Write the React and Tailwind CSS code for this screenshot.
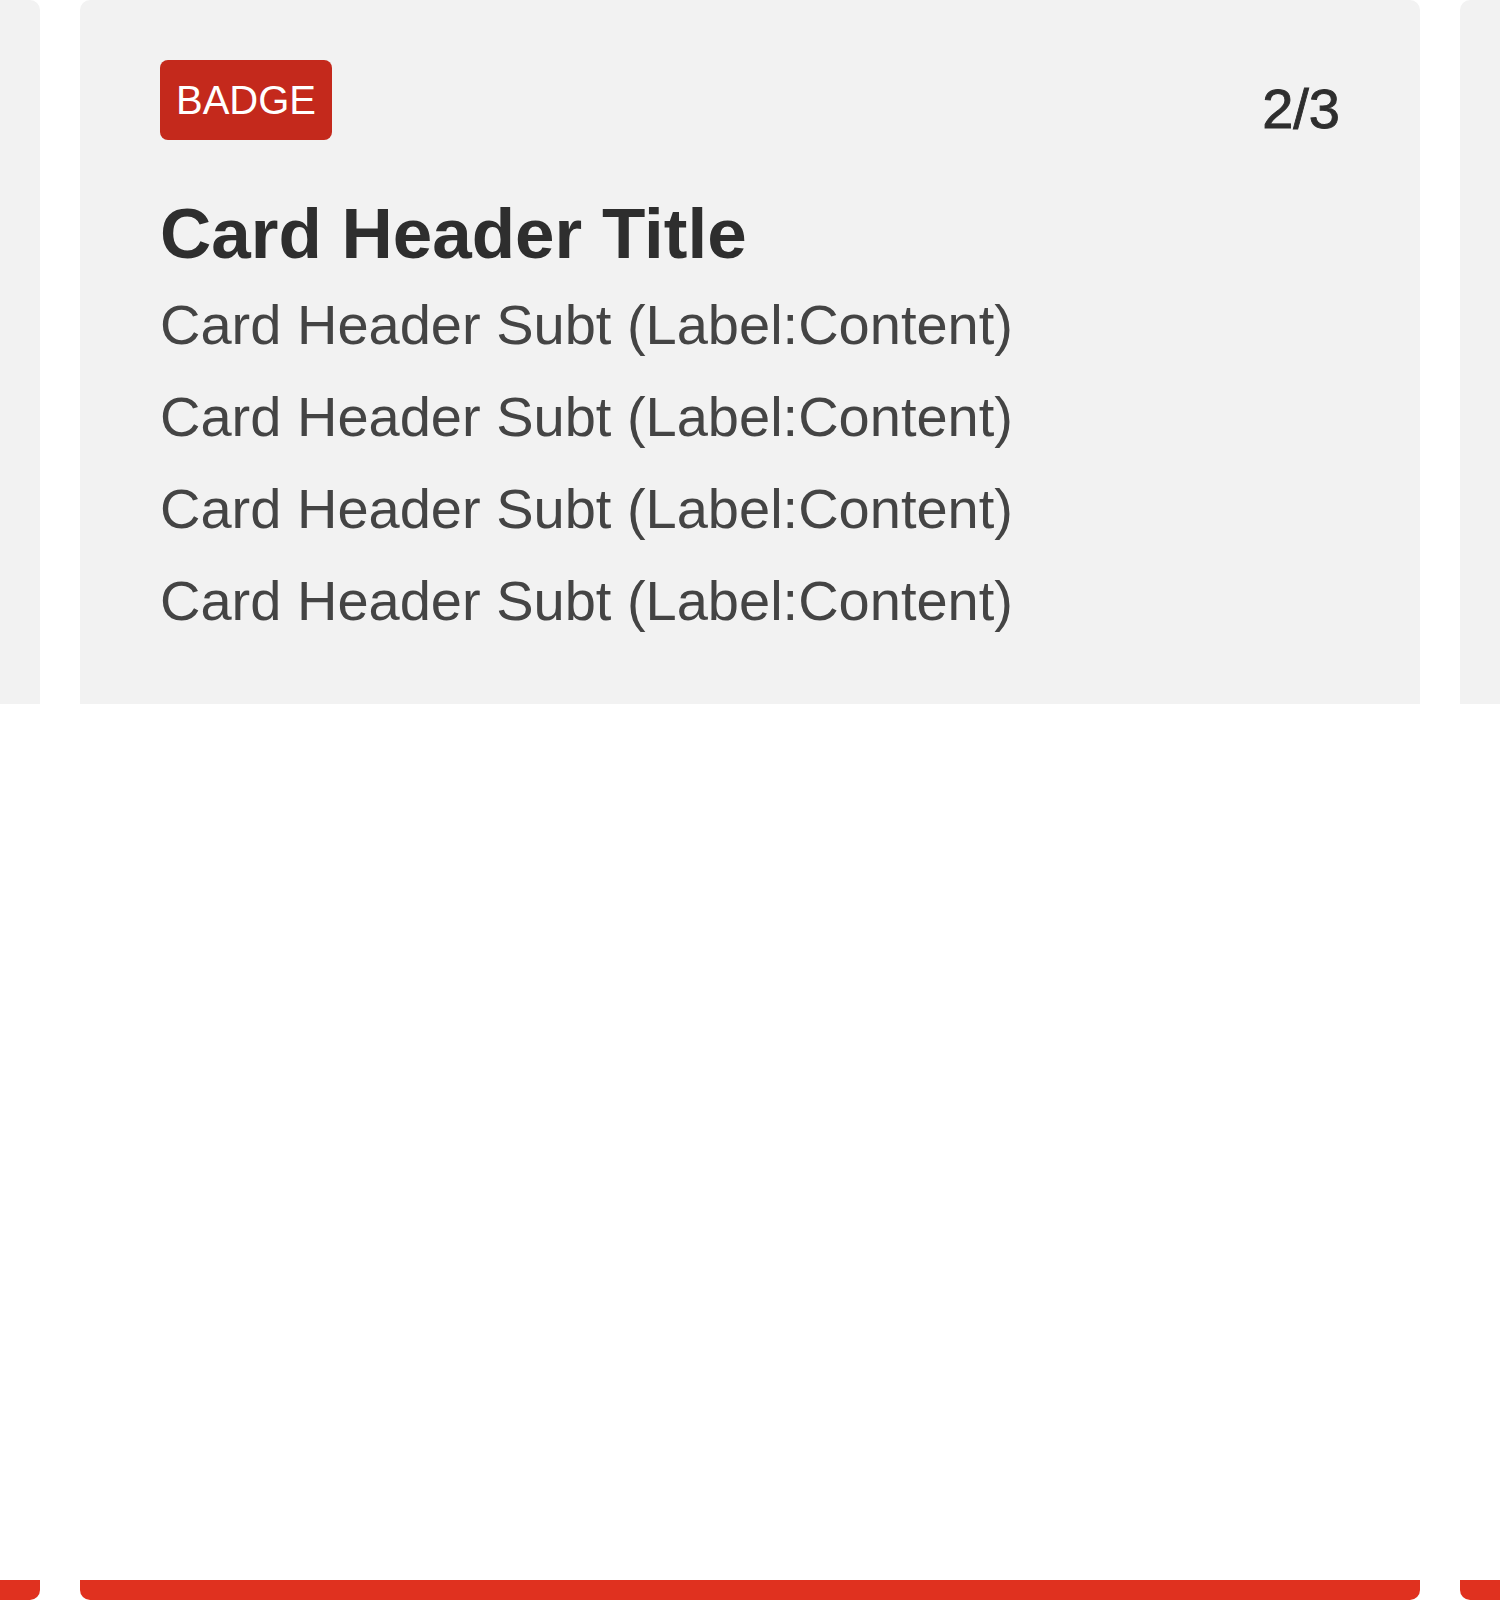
const lines = [
  "Card Header Subt (Label:Content)",
  "Card Header Subt (Label:Content)",
  "Card Header Subt (Label:Content)",
  "Card Header Subt (Label:Content)",
];

function Card({ index, total, peek }) {
  return (
    <div className="flex h-[1600px] w-[1340px] shrink-0 flex-col">
      {/* header */}
      <div className="h-[704px] rounded-t-[10px] bg-[#f2f2f2] px-[80px] pt-[60px]">
        {!peek && (
          <>
            <div className="flex items-start justify-between">
              <span className="flex h-[80px] items-center rounded-[8px] bg-[#c4291c] px-[16px] text-[40px] leading-none text-white">
                BADGE
              </span>
              <span className="mt-[21px] text-[56px] leading-none text-[#2e2e2e] [-webkit-text-stroke:0.9px_#2e2e2e]">
                {index}/{total}
              </span>
            </div>
            <h2 className="mt-[58px] text-[71px] font-bold leading-[71px] text-[#2e2e2e]">
              Card Header Title
            </h2>
            <div className="mt-[10px]">
              {lines.map((l, i) => (
                <p key={i} className="text-[56px] leading-[92px] text-[#444444]">
                  {l}
                </p>
              ))}
            </div>
          </>
        )}
      </div>

      {/* body */}
      <div className="flex-1 bg-white" />

      {/* footer bar */}
      <div className="h-[20px] rounded-b-[10px] bg-[#e0311f]" />
    </div>
  );
}

export default function App() {
  return (
    <div
      className="h-[1600px] w-full overflow-hidden bg-white"
      style={{ fontFamily: '"Liberation Sans", Arial, sans-serif' }}
    >
      <div className="-ml-[1300px] flex gap-[40px]">
        <Card index={1} total={3} peek />
        <Card index={2} total={3} />
        <Card index={3} total={3} peek />
      </div>
    </div>
  );
}
